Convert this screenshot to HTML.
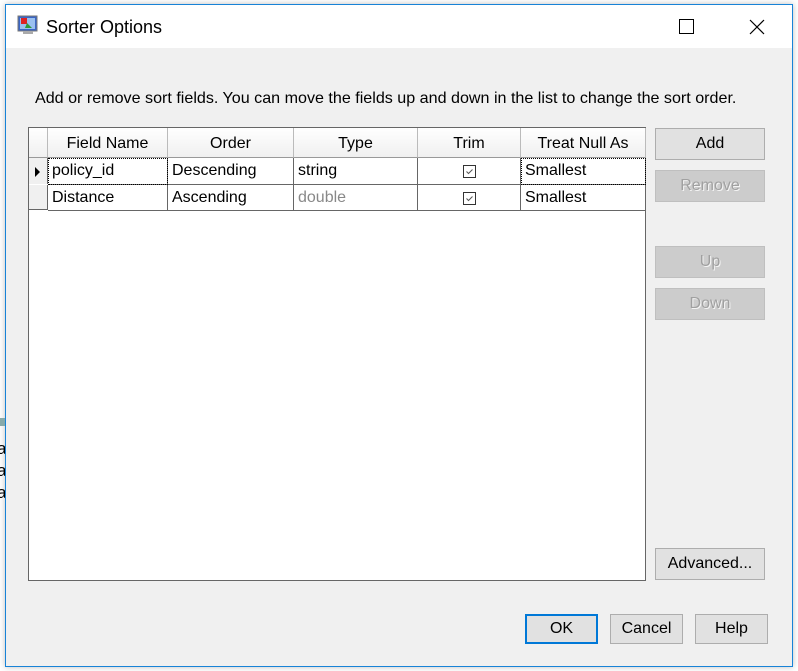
<!DOCTYPE html>
<html><head><style>
*{box-sizing:border-box;margin:0;padding:0}
body{width:798px;height:671px;background:#fff;position:relative;overflow:hidden;font-family:"Liberation Sans",sans-serif;font-size:16px;color:#000}
.abs{position:absolute}
.win{left:5px;top:4px;width:788px;height:663px;border:1px solid #1883d7;background:#f0f0f0;box-shadow:0 0 6px rgba(0,0,0,.25)}
.title{left:6px;top:5px;width:786px;height:43px;background:#fff}
.btn{position:absolute;background:#e1e1e1;border:1px solid #adadad;text-align:center;line-height:30px;font-size:16px}
.dis{background:#cccccc;border-color:#bfbfbf;color:#a0a0a0;text-shadow:1px 1px 0 #f4f4f4}
.hd{position:absolute;top:0;height:30px;background:linear-gradient(#fff,#f0f0f0);border-right:1px solid #bbb;border-bottom:1px solid #999;text-align:center;line-height:32px}
.cell{position:absolute;height:27px;border-right:1px solid #666;border-bottom:1px solid #666;line-height:25px;padding-left:4px;background:#fff}
.cb{position:absolute;width:13px;height:13px;border:1px solid #333;background:#fff;left:45px;top:7px;line-height:0}
.cb svg{display:block}
</style></head><body>
<div class="abs win"></div>
<div class="abs title"></div>
<svg class="abs" style="left:17px;top:14px" width="22" height="22" viewBox="0 0 22 22"><rect x="1" y="2" width="19" height="15" fill="#3a66c4" stroke="#777"/><rect x="3" y="4" width="15" height="11" fill="#9ac0f0"/><rect x="4" y="4" width="6" height="6" fill="#d22"/><path d="M10 9l5 5h-7z" fill="#2a9a3a"/><rect x="6" y="17" width="10" height="3" fill="#aaa"/></svg>
<div class="abs" style="left:46px;top:17px;font-size:18px">Sorter Options</div>
<div class="abs" style="left:679px;top:19px;width:15px;height:15px;border:1px solid #000"></div>
<svg class="abs" style="left:749px;top:19px" width="16" height="16"><path d="M1 1L15 15M15 1L1 15" stroke="#000" stroke-width="1.2"/></svg>
<div class="abs" style="left:35px;top:89px;font-size:16.1px">Add or remove sort fields. You can move the fields up and down in the list to change the sort order.</div>
<div class="abs" style="left:28px;top:127px;width:618px;height:454px;border:1px solid #666;background:#fff">
 <div class="hd" style="left:0;width:19px;border-right:1px solid #bbb"></div>
 <div class="hd" style="left:19px;width:120px">Field Name</div>
 <div class="hd" style="left:139px;width:126px">Order</div>
 <div class="hd" style="left:265px;width:124px">Type</div>
 <div class="hd" style="left:389px;width:103px">Trim</div>
 <div class="hd" style="left:492px;width:125px">Treat Null As</div>
 <div class="abs" style="left:0;top:30px;width:19px;height:52px;background:#f0f0f0;border-right:1px solid #666;border-bottom:1px solid #666"></div>
 <div class="abs" style="left:0;top:56px;width:19px;height:1px;background:#fff"></div>
 <svg class="abs" style="left:6px;top:39px" width="6" height="10"><path d="M0 0L5 5L0 10z" fill="#000"/></svg>
 <div class="cell" style="left:19px;top:30px;width:120px;outline:1px dotted #000;outline-offset:-1px">policy_id</div>
 <div class="cell" style="left:139px;top:30px;width:126px">Descending</div>
 <div class="cell" style="left:265px;top:30px;width:124px">string</div>
 <div class="cell" style="left:389px;top:30px;width:103px"><div class="cb"><svg width="11" height="11"><path d="M2.5 5.5L4.5 7.5L8.5 3.5" stroke="#555" fill="none"/></svg></div></div>
 <div class="cell" style="left:492px;top:30px;width:125px;outline:1px dotted #000;outline-offset:-1px">Smallest</div>
 <div class="cell" style="left:19px;top:57px;width:120px;height:26px">Distance</div>
 <div class="cell" style="left:139px;top:57px;width:126px;height:26px">Ascending</div>
 <div class="cell" style="left:265px;top:57px;width:124px;height:26px;color:#888">double</div>
 <div class="cell" style="left:389px;top:57px;width:103px;height:26px"><div class="cb"><svg width="11" height="11"><path d="M2.5 5.5L4.5 7.5L8.5 3.5" stroke="#555" fill="none"/></svg></div></div>
 <div class="cell" style="left:492px;top:57px;width:125px;height:26px">Smallest</div>
</div>
<div class="btn" style="left:655px;top:128px;width:110px;height:32px">Add</div>
<div class="btn dis" style="left:655px;top:170px;width:110px;height:32px">Remove</div>
<div class="btn dis" style="left:655px;top:246px;width:110px;height:32px">Up</div>
<div class="btn dis" style="left:655px;top:288px;width:110px;height:32px">Down</div>
<div class="btn" style="left:655px;top:548px;width:110px;height:32px">Advanced...</div>
<div class="btn" style="left:525px;top:614px;width:73px;height:30px;border:2px solid #0078d7;line-height:26px">OK</div>
<div class="btn" style="left:610px;top:614px;width:73px;height:30px;line-height:28px">Cancel</div>
<div class="btn" style="left:695px;top:614px;width:73px;height:30px;line-height:28px">Help</div>
<div class="abs" style="left:0;top:418px;width:5px;height:8px;background:#8aa"></div>
<div class="abs" style="left:-3px;top:438px;width:8px;height:70px;font-size:17px;overflow:hidden;line-height:22px;color:#000">a<br>a<br>a</div>
</body></html>
